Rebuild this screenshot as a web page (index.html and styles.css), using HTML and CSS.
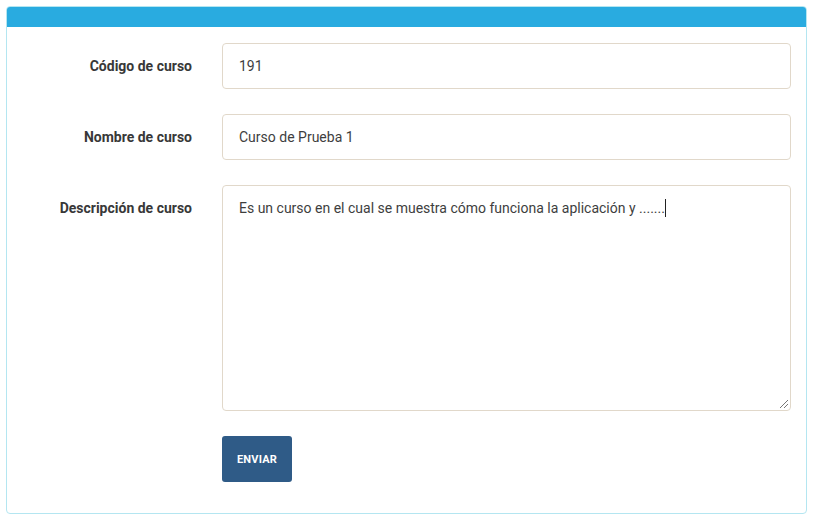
FILE: index.html
```html
<!DOCTYPE html>
<html lang="es">
<head>
<meta charset="utf-8">
<link rel="stylesheet" href="styles.css">
</head>
<body>
<div class="card">
  <div class="card-header"></div>
  <form class="card-body">
    <label class="label" for="codigo">Código de curso</label>
    <input class="field" id="codigo" type="text" value="191">
    <label class="label" for="nombre">Nombre de curso</label>
    <input class="field" id="nombre" type="text" value="Curso de Prueba 1">
    <label class="label" for="desc">Descripción de curso</label>
    <div class="field area"><span>Es un curso en el cual se muestra cómo funciona la aplicación y .......</span><span class="caret"></span><span class="grip"></span></div>
    <div></div>
    <div><button class="btn" type="button">ENVIAR</button></div>
  </form>
</div>
</body>
</html>
```
FILE: styles.css
```css
* { box-sizing: border-box; }
body {
  margin: 0;
  padding: 6px;
  background: #fff;
  font-family: Roboto, "Liberation Sans", sans-serif;
}
.card {
  width: 801px;
  height: 508px;
  border: 1px solid #b4e6f1;
  border-radius: 4px;
  background: #fff;
  overflow: hidden;
}
.card-header {
  height: 21px;
  margin: -1px -1px 0;
  background: #29abe0;
  border-radius: 4px 4px 0 0;
}
.card-body {
  display: grid;
  grid-template-columns: 171px 569px;
  column-gap: 30px;
  row-gap: 25px;
  padding: 16px 14px 0 14px;
}
.label {
  text-align: right;
  font-weight: 700;
  font-size: 14px;
  line-height: 20px;
  padding-top: 13px;
  color: #383838;
}
.field {
  display: block;
  width: 100%;
  height: 46px;
  border: 1px solid #e1d8ca;
  border-radius: 4px;
  padding: 12px 16px;
  font-family: Roboto, "Liberation Sans", sans-serif;
  font-size: 14px;
  line-height: 20px;
  color: #3e3e3e;
  background: #fff;
  outline: none;
}
.area {
  position: relative;
  height: 226px;
}
.caret {
  display: inline-block;
  width: 1px;
  height: 18px;
  background: #222;
  vertical-align: -4px;
}
.grip {
  position: absolute;
  right: 2px;
  bottom: 2px;
  width: 8px;
  height: 8px;
  background: linear-gradient(135deg, transparent 45%, #777 45%, #777 55%, transparent 55%, transparent 70%, #777 70%, #777 80%, transparent 80%);
}
.btn {
  width: 70px;
  height: 46px;
  border: none;
  border-radius: 3px;
  background: #2f5b87;
  color: #fff;
  font-family: Roboto, "Liberation Sans", sans-serif;
  font-weight: 700;
  font-size: 11px;
  letter-spacing: 0.2px;
  padding: 0;
}
```
